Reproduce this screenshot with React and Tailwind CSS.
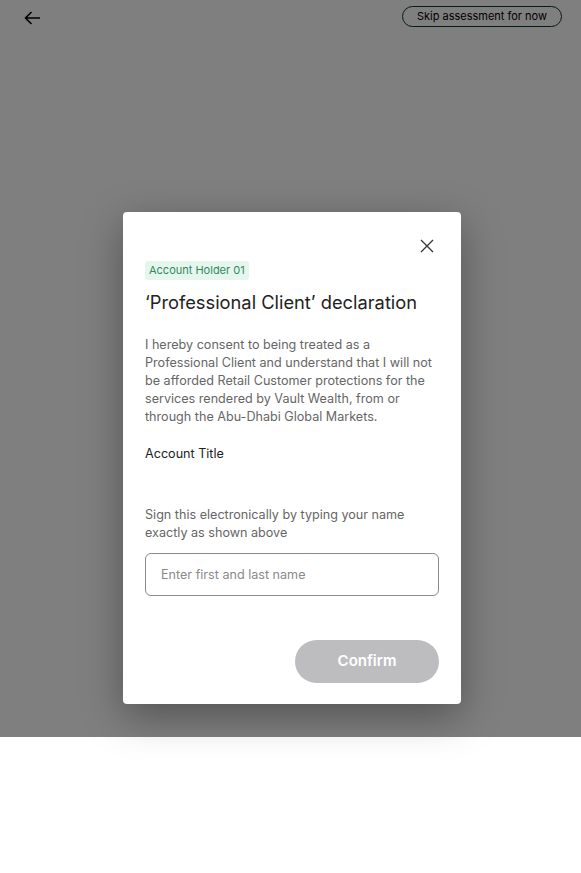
import React from 'react';

export default function App() {
  return (
    <div className="bg-white min-h-[873px]" style={{ fontFamily: 'Inter, "Noto Sans", sans-serif' }}>
      <div className="relative h-[737px] bg-white">
        <div className="flex items-center justify-between pl-[24px] pr-[19px] pt-[6px]">
          <svg width="17" height="14" viewBox="0 0 17 14" fill="none" stroke="#000" strokeWidth="1.6" className="mt-[3px]">
            <path d="M16 7H1.5M7.5 1L1.5 7l6 6" />
          </svg>
          <button className="h-[21px] px-[14px] rounded-full border border-[#063a2a] text-[11px] text-black leading-none">
            Skip assessment for now
          </button>
        </div>

        <div className="absolute inset-0 bg-black/50">
          <div className="ml-[123px] mt-[212px] w-[338px] h-[492px] bg-white rounded-[4px] shadow-[0_12px_40px_rgba(0,0,0,0.35)] px-[22px] pt-[27px]">
            <div className="flex justify-end pr-[5px]">
              <svg width="14" height="14" viewBox="0 0 14 14" stroke="#333" strokeWidth="1.3" fill="none">
                <path d="M1 1l12 12M13 1L1 13" />
              </svg>
            </div>
            <span className="inline-block mt-[8px] h-[19px] px-[4px] rounded-[3px] bg-[#e6f6ee] text-[#2f8a60] text-[11px] leading-[19px]">
              Account Holder 01
            </span>
            <h2 className="mt-[10px] text-[18.3px] leading-[24px] text-[#222]">‘Professional Client’ declaration</h2>
            <p className="mt-[22px] text-[12.6px] leading-[18px] text-[#666]">
              I hereby consent to being treated as a Professional Client and understand that I will not be afforded Retail Customer protections for the services rendered by Vault Wealth, from or through the Abu-Dhabi Global Markets.
            </p>
            <p className="mt-[19px] text-[12.6px] leading-[18px] text-[#222]">Account Title</p>
            <p className="mt-[43px] text-[12.6px] leading-[18px] text-[#666]">
              Sign this electronically by typing your name exactly as shown above
            </p>
            <input
              className="mt-[11px] w-[294px] h-[43px] rounded-[6px] border border-[#8a8a8a] px-[15px] text-[12.6px] outline-none placeholder:text-[#8a8a8a]"
              placeholder="Enter first and last name"
            />
            <div className="flex justify-end mt-[44px]">
              <button className="w-[144px] h-[43px] rounded-full bg-[#bdbdc0] text-white text-[15px] font-semibold">
                Confirm
              </button>
            </div>
          </div>
        </div>
      </div>
    </div>
  );
}
